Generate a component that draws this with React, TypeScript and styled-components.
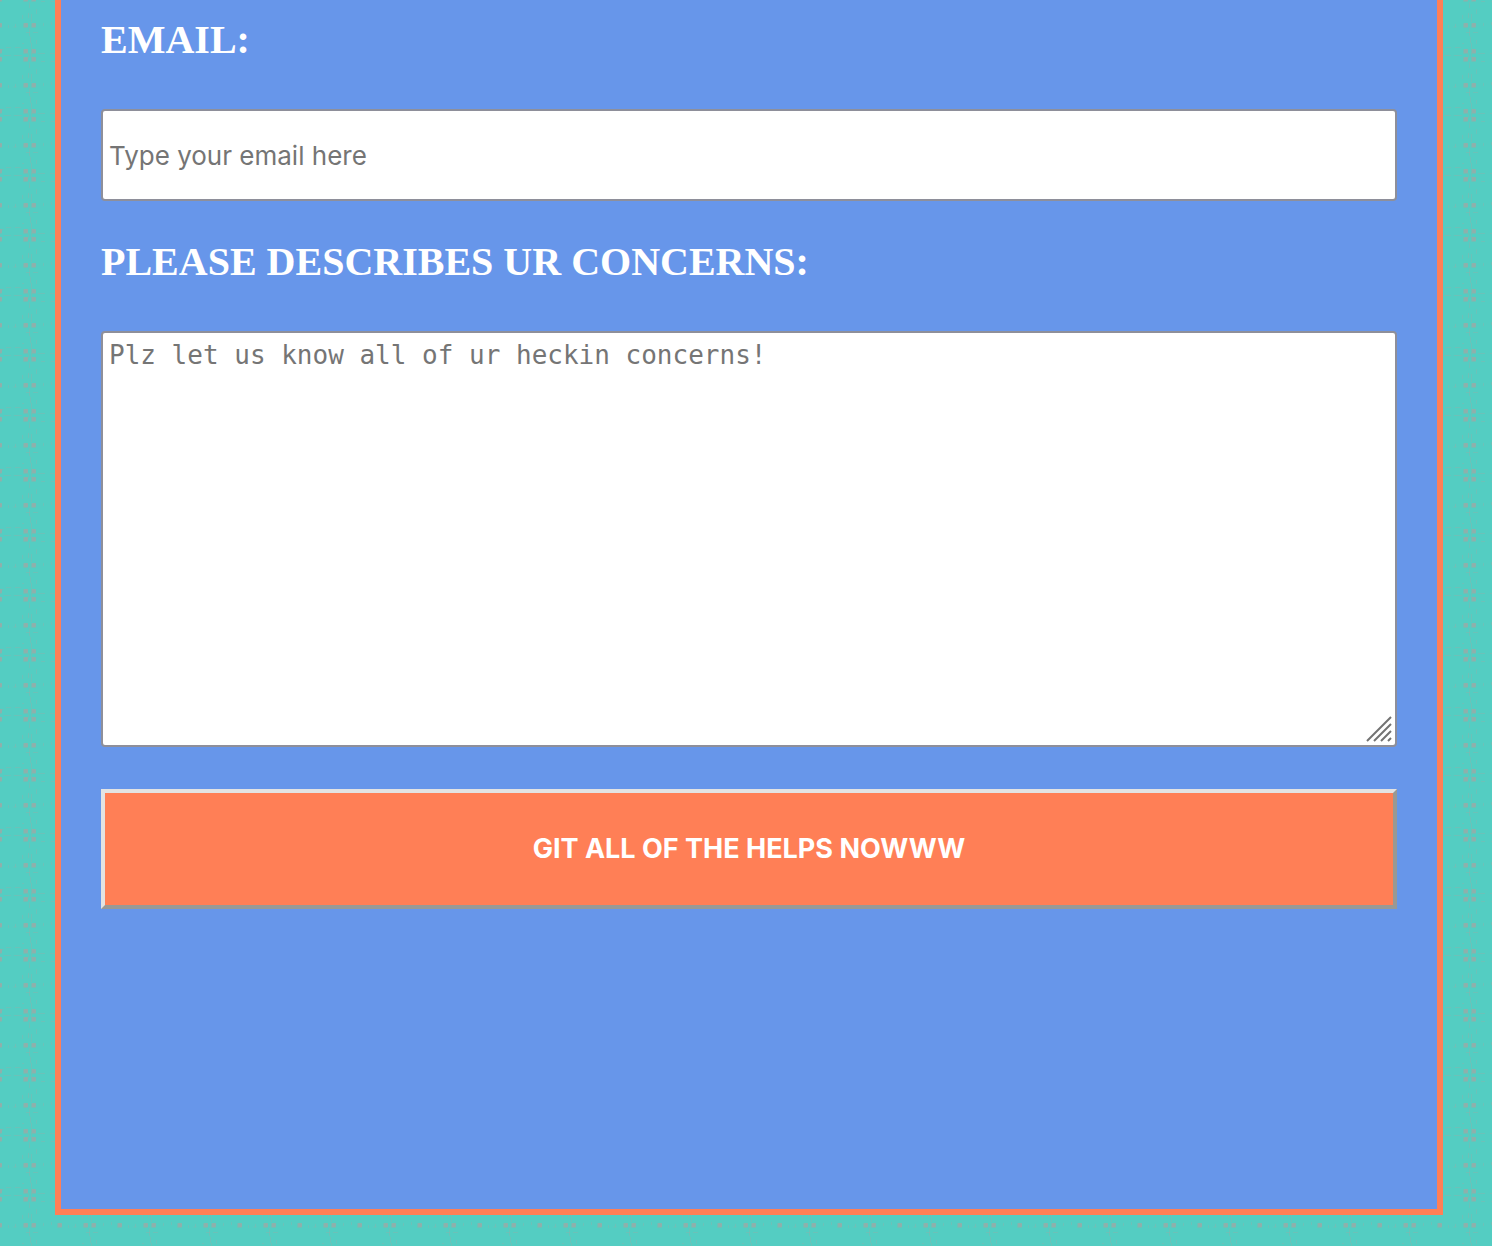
import React from "react";
import styled, { createGlobalStyle } from "styled-components";

const dotColumns = [0, 26, 34, 60];
const dotRows = [-1, 25, 51, 59];
const dots = dotRows
  .flatMap((y) =>
    dotColumns.map(
      (x) =>
        `<rect x="${x - 3}" y="${y - 2}" width="5" height="5" rx="1" opacity=".4"/><rect x="${x - 2}" y="${y - 2}" width="4" height="4" rx="1" opacity=".75"/>`
    )
  )
  .join("");

const tile = `<svg xmlns="http://www.w3.org/2000/svg" width="60" height="60" viewBox="0 0 60 60">
<g fill="#98aba6">${dots}</g>
<g fill="none" stroke="#98aba6" stroke-opacity=".35">
<path d="M6 47.500h5M15 47.500h6M4 55.500h7M14 55.500h8M38 53.500h7M50 53.500h5M41 1.500h4M51 1.500h4M2 49.500h2"/>
<path d="M8.500 25v3M15.500 24v3M13.500 27h3M43.500 23v3M51.500 22v3M28.500 13v5M31.500 14v8M26 32.500h4M33 32.500h5M29.500 28v8M30.500 37v6M22.500 15v4M22 43.500h2M31.500 43v6M36.500 40v4M29.500 2v6M36.500 9v5M28.500 53v5M31.500 53v5"/>
</g>
</svg>`;

const GlobalStyle = createGlobalStyle`
  *, *::before, *::after { box-sizing: border-box; }
  body {
    margin: 0;
    background: #54cdc2 url("data:image/svg+xml,${encodeURIComponent(tile)}");
    font-family: "Liberation Serif", serif;
  }
`;

const Page = styled.main`
  padding: 0 49px 31px 55px;
`;

const Form = styled.form`
  display: flex;
  flex-direction: column;
  padding: 15px 40px 300px;
  background: #6796ea;
  border: 6px solid #ff7f56;
  border-top: 0;
`;

const Label = styled.label`
  margin-bottom: 44px;
  color: #fff;
  font-size: 40px;
  font-weight: 700;
  line-height: 50px;
`;

const field = `
  display: block;
  width: 100%;
  border: 2px solid #8e8f9a;
  border-radius: 4px;
  background: #fff;
  color: #222;
  &::placeholder { color: #757575; opacity: 1; }
`;

const TextInput = styled.input`
  ${field}
  height: 92px;
  margin: 0 0 36px;
  padding: 0 6px;
  font: 400 26px/32px Inter, sans-serif;
`;

const AreaWrap = styled.div`
  position: relative;
  margin-bottom: 42px;
`;

const TextArea = styled.textarea`
  ${field}
  height: 416px;
  margin: 0;
  padding: 6px;
  font: 400 26px/32px "DejaVu Sans Mono", monospace;
  resize: none;
`;

const Grip = styled.svg`
  position: absolute;
  right: 4px;
  bottom: 4px;
  pointer-events: none;
`;

const SubmitButton = styled.button`
  height: 120px;
  border: 4px solid;
  border-color: #e3e3e3 #999995 #999995 #e3e3e3;
  background: #ff7f56;
  color: #fff;
  font: 700 27px/32px Inter, sans-serif;
`;

export default function App() {
  return (
    <>
      <GlobalStyle />
      <Page>
        <Form onSubmit={(e: React.FormEvent) => e.preventDefault()}>
          <Label htmlFor="email">EMAIL:</Label>
          <TextInput id="email" type="email" placeholder="Type your email here" />
          <Label htmlFor="concerns">PLEASE DESCRIBES UR CONCERNS:</Label>
          <AreaWrap>
            <TextArea id="concerns" placeholder="Plz let us know all of ur heckin concerns!" />
            <Grip width="28" height="28" viewBox="0 0 28 28" fill="none" stroke="#737373" strokeWidth="2" aria-hidden="true">
              <path d="M2 26 26 2M9 26 26 9M16 26l10-10M23 26l3-3" />
            </Grip>
          </AreaWrap>
          <SubmitButton type="submit">GIT ALL OF THE HELPS NOWWW</SubmitButton>
        </Form>
      </Page>
    </>
  );
}
